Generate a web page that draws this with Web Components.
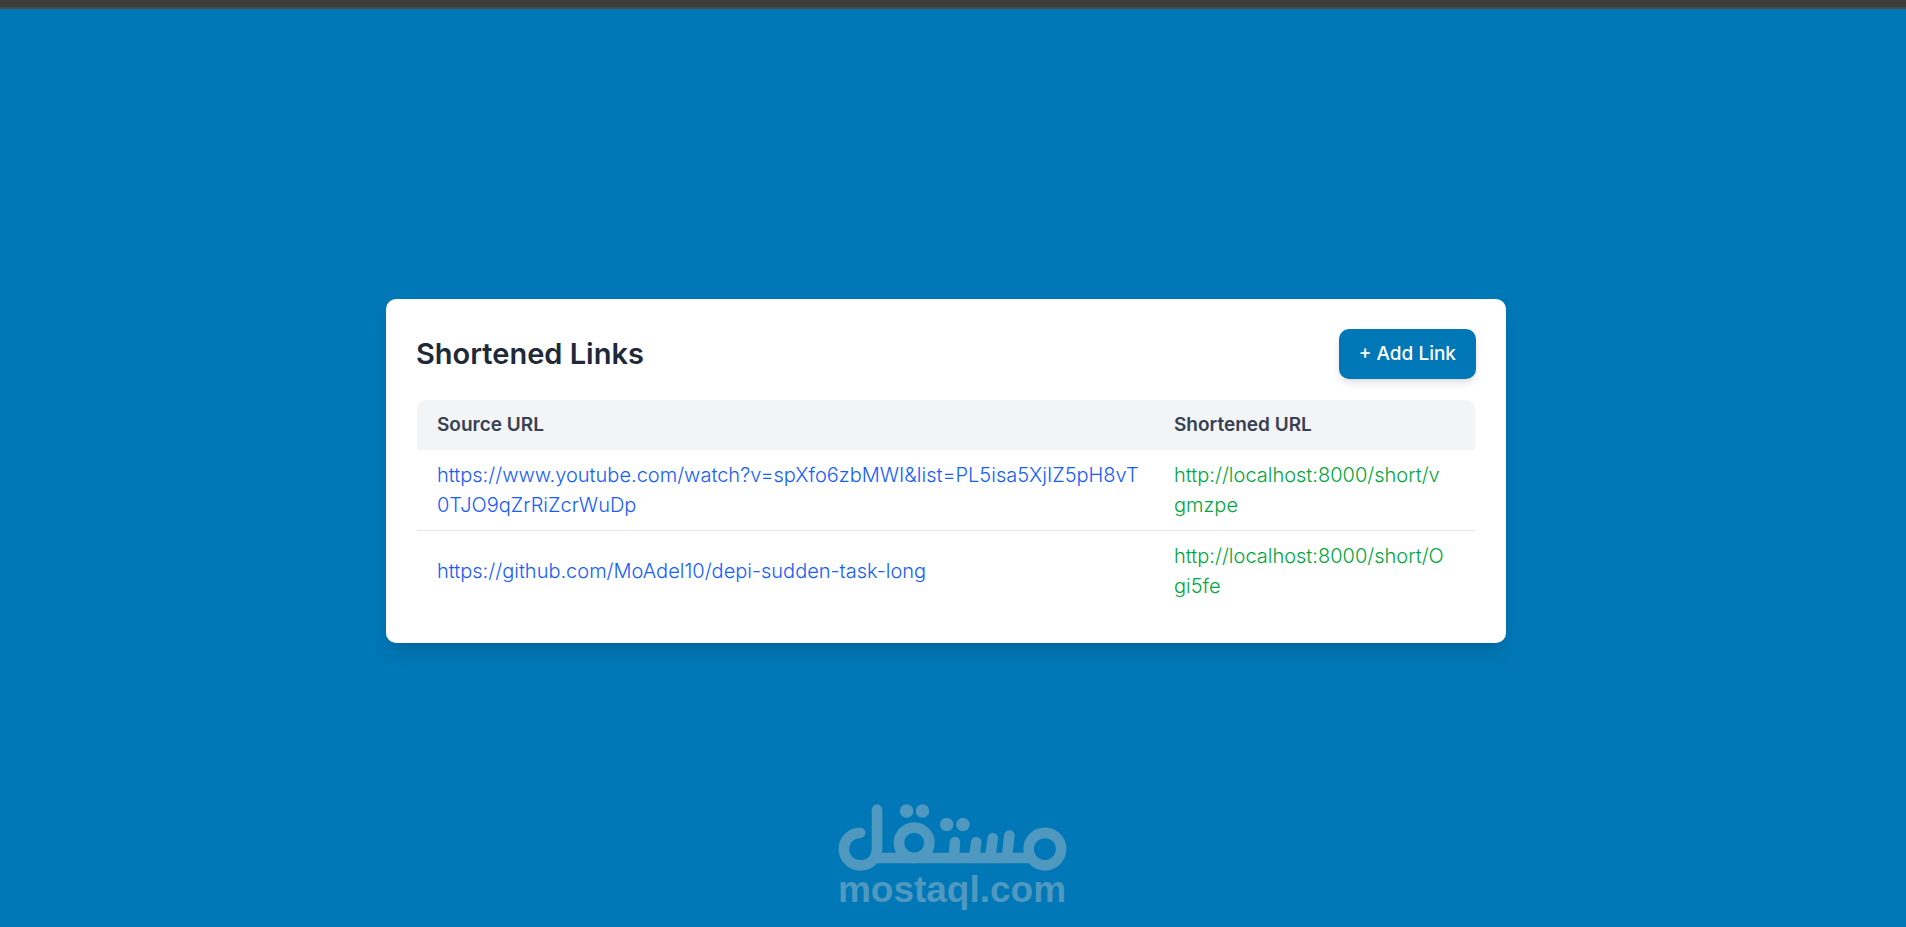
<!DOCTYPE html>
<html lang="en">
<head>
<meta charset="utf-8">
<meta name="viewport" content="width=device-width, initial-scale=1">
<title>Shortened Links</title>
<style>
  body { margin: 0; font-family: Inter, "Liberation Sans", sans-serif; background: #0077b6; }
</style>
</head>
<body>
<app-shell>
  <links-card heading="Shortened Links"></links-card>
  <brand-mark slot="overlay"></brand-mark>
</app-shell>

<template id="shell-template">
  <style>
    :host { display: flex; flex-direction: column; min-height: 100vh; position: relative; background: #0077b6; }
    .bar { height: 7px; background: #3c3c3c; border-bottom: 2px solid #4b4c4d; }
    main { flex: 1; display: flex; align-items: center; justify-content: center; padding: 5px 14px 0 0; }
    ::slotted(links-card) { flex: 0 1 1120px; }
    .overlay { position: absolute; left: 0; right: 2px; bottom: 18px; display: flex; justify-content: center; pointer-events: none; }
  </style>
  <div class="bar"></div>
  <main><slot></slot></main>
  <div class="overlay"><slot name="overlay"></slot></div>
</template>

<template id="card-template">
  <style>
    :host { display: block; box-sizing: border-box; padding: 30px; border-radius: 10px; background: #fff;
      box-shadow: 0 12px 19px -4px rgba(0,0,0,.1), 0 5px 8px -5px rgba(0,0,0,.1); }
    header { display: flex; align-items: center; justify-content: space-between; margin-bottom: 20px; }
    h1 { margin: 0; font-size: 29px; line-height: 40px; font-weight: 600; color: #1e2939; }
  </style>
  <header><h1></h1><add-button>+ Add Link</add-button></header>
  <links-table></links-table>
</template>

<template id="button-template">
  <style>
    :host { display: block; }
    button { display: block; border: 0; border-radius: 10px; padding: 10px 20px; font: 500 19px/30px Inter, sans-serif; color: #fff; background: #0077b6; cursor: pointer;
      box-shadow: 0 5px 8px -1px rgba(0,0,0,.1), 0 2px 5px -2px rgba(0,0,0,.1); }
  </style>
  <button type="button"><slot></slot></button>
</template>

<template id="table-template">
  <style>
    :host { display: block; border: 1px solid #fff; border-radius: 10px; overflow: hidden; }
    table { width: 100%; border-collapse: collapse; table-layout: fixed; }
    th, td { box-sizing: border-box; padding: 10px 10px 10px 20px; text-align: left; line-height: 30px; }
    .short { width: 321px; }
    th { font-size: 19px; font-weight: 600; color: #364153; background: #f3f4f6; }
    td { font-size: 20px; font-weight: 300; overflow-wrap: anywhere; }
    tbody tr { border-bottom: 1px solid #e5e7eb; }
    tbody tr:last-child { border-bottom-color: #fff; }
    a { color: #155dfc; text-decoration: none; }
    td + td a { color: #00a63e; }
    .run { white-space: nowrap; }
  </style>
  <table>
    <thead><tr><th scope="col">Source URL</th><th scope="col" class="short">Shortened URL</th></tr></thead>
    <tbody>
      <tr>
        <td><a href="https://www.youtube.com/watch?v=spXfo6zbMWI&amp;list=PL5isa5XjIZ5pH8vT0TJO9qZrRiZcrWuDp"><span class="run">https://www.youtube.com/watch?v=spXfo6zbMWI&amp;list=PL5isa5XjIZ5pH8vT</span><wbr>0TJO9qZrRiZcrWuDp</a></td>
        <td><a href="http://localhost:8000/short/vgmzpe"><span class="run">http://localhost:8000/short/v</span><wbr>gmzpe</a></td>
      </tr>
      <tr>
        <td><a href="https://github.com/MoAdel10/depi-sudden-task-long">https://github.com/MoAdel10/depi-sudden-task-long</a></td>
        <td><a href="http://localhost:8000/short/Ogi5fe"><span class="run">http://localhost:8000/short/O</span><wbr>gi5fe</a></td>
      </tr>
    </tbody>
  </table>
</template>

<template id="brand-template">
  <style>
    :host { display: flex; flex-direction: column; align-items: center; color: #4f98c0; }
    svg { display: block; width: 229px; height: 67px; }
    span { font: 700 37px/38px "Liberation Sans", sans-serif; }
  </style>
  <svg viewBox="54 39 687 202" role="img" aria-label="مستقل" fill="none" stroke="currentColor" stroke-width="32" stroke-linecap="round">
    <path d="M119 126A49 49 0 1 0 119 224C150 224 170 204 170 170V56"/>
    <path d="M155 202H645" stroke-linecap="butt"/>
    <circle cx="282" cy="156" r="46"/>
    <circle cx="676" cy="175" r="49"/>
    <path d="M405 154L402 195M469 154L464 195M519 142L512 195M569 134L562 195"/>
    <g fill="currentColor" stroke="none"><circle cx="259" cy="60" r="20.500"/><circle cx="307" cy="60" r="20.500"/><circle cx="380" cy="101" r="20.500"/><circle cx="429" cy="101" r="20.500"/></g>
  </svg>
  <span>mostaql.com</span>
</template>

<script>
  class TemplateElement extends HTMLElement {
    constructor() {
      super();
      this.attachShadow({ mode: 'open' })
        .append(document.getElementById(this.constructor.template).content.cloneNode(true));
    }
  }
  customElements.define('app-shell', class extends TemplateElement { static template = 'shell-template'; });
  customElements.define('add-button', class extends TemplateElement { static template = 'button-template'; });
  customElements.define('links-table', class extends TemplateElement { static template = 'table-template'; });
  customElements.define('brand-mark', class extends TemplateElement { static template = 'brand-template'; });
  customElements.define('links-card', class extends TemplateElement {
    static template = 'card-template';
    connectedCallback() { this.shadowRoot.querySelector('h1').textContent = this.getAttribute('heading'); }
  });
</script>
</body>
</html>
